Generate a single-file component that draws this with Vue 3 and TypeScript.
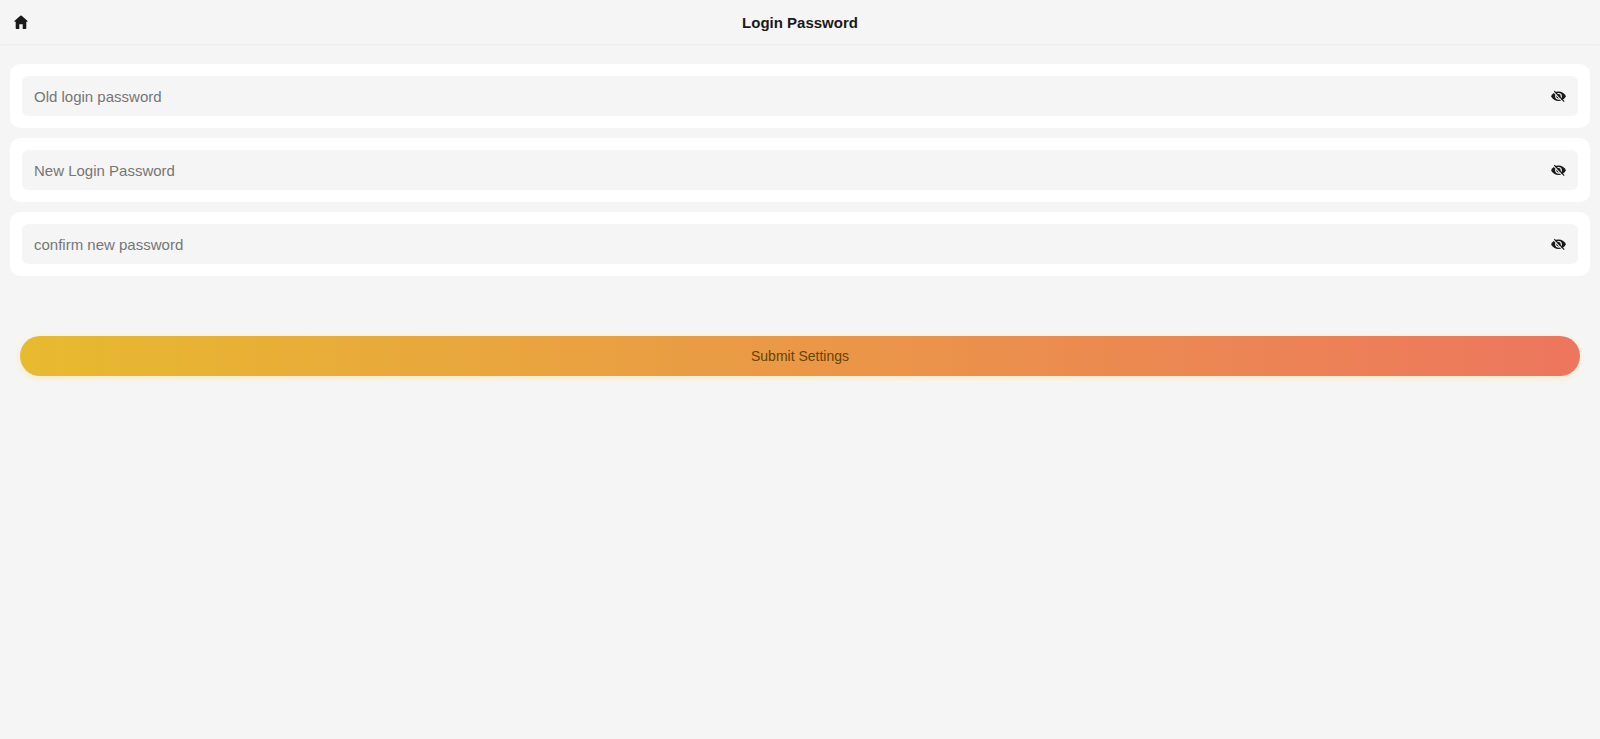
<script setup lang="ts">
import { ref } from 'vue'

interface Field {
  id: string
  label: string
  value: string
  visible: boolean
}

const fields = ref<Field[]>([
  { id: 'old-password', label: 'Old login password', value: '', visible: false },
  { id: 'new-password', label: 'New Login Password', value: '', visible: false },
  { id: 'confirm-password', label: 'confirm new password', value: '', visible: false },
])
</script>

<template>
  <div class="page">
    <header class="bar">
      <a class="home" href="#" aria-label="Home">
        <svg viewBox="0 0 14 14" aria-hidden="true">
          <path d="M6.3.7Q7 .1 7.700.7L13.600 5.900Q14 6.700 13.200 6.700H12.300V13.200Q12.300 14 11.500 14H8.700V9.300H5.300V14H2.500Q1.700 14 1.700 13.200V6.700H.8Q0 6.700.4 5.900Z" />
        </svg>
      </a>
      <h1 class="title">Login Password</h1>
    </header>

    <form class="form" @submit.prevent>
      <div v-for="field in fields" :key="field.id" class="card">
        <div class="field">
          <input
            :id="field.id"
            v-model="field.value"
            class="input"
            :type="field.visible ? 'text' : 'password'"
            :placeholder="field.label"
            :aria-label="field.label"
          />
          <button
            class="eye"
            type="button"
            aria-label="Toggle password visibility"
            @click="field.visible = !field.visible"
          >
            <svg viewBox="0 0 16 16" aria-hidden="true">
              <path class="lid" d="M1 8.300C2.500 5.200 5.300 3.500 8.500 3.500S14.500 5.200 16 8.300C14.500 11.400 11.700 13.100 8.500 13.100S2.500 11.400 1 8.300Z" />
              <circle class="iris" cx="8.500" cy="8.300" r="2.800" />
              <path class="gap" d="M3.300 3.700 12.900 13.900" />
              <path class="slash" d="M4.300 3.100 14.200 13.700" />
            </svg>
          </button>
        </div>
      </div>
      <button class="submit" type="submit">Submit Settings</button>
    </form>
  </div>
</template>

<style>
body {
  background: #f5f5f5;
}
</style>

<style scoped>
.page {
  min-height: 100vh;
  background: #f5f5f5;
  color: #1a1a1a;
  font-family: "Liberation Sans", Arial, sans-serif;
}

.bar {
  display: grid;
  box-sizing: border-box;
  grid-template-columns: 40px 1fr 40px;
  align-items: center;
  height: 44px;
  padding-top: 2px;
  box-shadow: 0 1px 2px rgba(0, 0, 0, 0.04);
}

.home {
  display: flex;
  padding: 0 14px 2px;
  color: inherit;
}

.home svg {
  flex: none;
  width: 14px;
  height: 14px;
  fill: currentColor;
}

.title {
  margin: 0;
  font-size: 15px;
  line-height: 20px;
  font-weight: 700;
  text-align: center;
}

.form {
  display: flex;
  flex-direction: column;
  gap: 10px;
  padding: 20px 10px;
}

.card {
  padding: 12px;
  border-radius: 10px;
  background: #fff;
}

.field {
  display: flex;
  align-items: center;
  height: 40px;
  padding: 0 12px;
  border-radius: 6px;
  background: #f5f5f5;
}

.input {
  flex: 1;
  min-width: 0;
  height: 40px;
  padding: 0;
  border: 0;
  outline: 0;
  background: transparent;
  color: inherit;
  font: inherit;
  font-size: 15px;
}

.input::placeholder {
  color: #757575;
}

.eye {
  display: flex;
  padding: 0;
  border: 0;
  background: transparent;
  color: inherit;
  cursor: pointer;
}

.eye svg {
  width: 16px;
  height: 16px;
}

.lid {
  fill: currentColor;
}

.iris {
  fill: none;
  stroke: #f5f5f5;
  stroke-width: 1.2;
}

.gap,
.slash {
  fill: none;
  stroke: #f5f5f5;
  stroke-width: 1.2;
}

.slash {
  stroke: currentColor;
}

.submit {
  height: 40px;
  margin: 50px 10px 0;
  padding: 0;
  border: 0;
  border-radius: 20px;
  background: linear-gradient(90deg, #e7ba2f, #ed765e);
  box-shadow: 0 2px 6px rgba(255, 213, 79, 0.3);
  color: #664400;
  font: inherit;
  font-size: 14px;
  cursor: pointer;
}
</style>
